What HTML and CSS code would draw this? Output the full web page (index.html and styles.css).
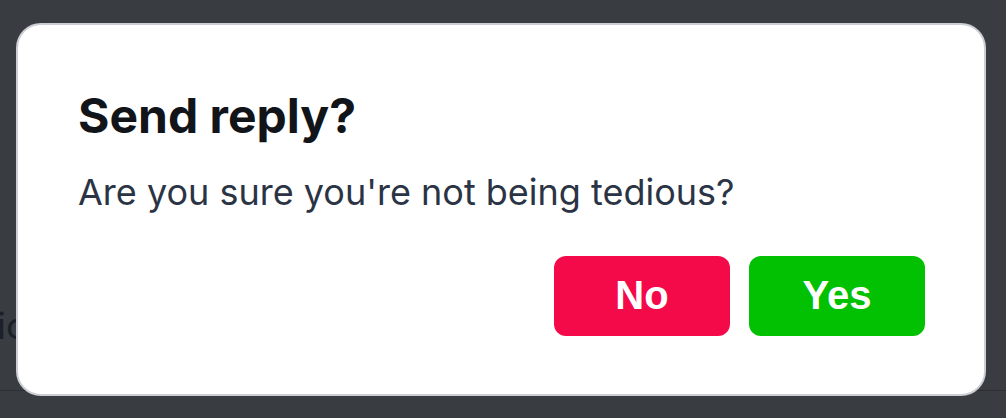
FILE: index.html
```html
<!DOCTYPE html>
<html lang="en">
<head>
    <meta charset="UTF-8">
    <meta name="viewport" content="width=device-width, initial-scale=1.0">
    <title>Send reply?</title>
    <link rel="stylesheet" href="styles.css">
</head>
<body>
    <div class="page">
        <p class="page-line">ic</p>
        <div class="page-footer"></div>
    </div>

    <div class="backdrop">
        <div class="dialog" role="dialog" aria-labelledby="dialogTitle">
            <h1 class="dialog-title" id="dialogTitle">Send reply?</h1>
            <p class="dialog-text">Are you sure you're not being tedious?</p>
            <div class="dialog-actions">
                <button type="button" class="btn btn-no">No</button>
                <button type="button" class="btn btn-yes">Yes</button>
            </div>
        </div>
    </div>
</body>
</html>
```

FILE: styles.css
```css
* {
    margin: 0;
    padding: 0;
    box-sizing: border-box;
}

html, body {
    height: 100%;
    overflow: hidden;
}

body {
    font-family: Inter, 'Noto Sans', sans-serif;
    background: #393d41;
}

/* page behind the overlay */
.page {
    padding-top: 298px;
}

.page-line {
    margin-left: -3px;
    font-size: 37px;
    line-height: 1.5;
    color: #1b1f2a;
    white-space: nowrap;
}

.page-footer {
    margin-top: 36px;
    border-top: 1px solid #2c2f33;
}

/* modal */
.backdrop {
    position: fixed;
    inset: 0;
    display: flex;
    padding: 23px 20px 22px 16px;
}

.dialog {
    flex: 1;
    display: flex;
    flex-direction: column;
    background: white;
    border: 2px solid #cbcfd5;
    border-radius: 25px;
    padding: 62px 59px 60px 60px;
}

.dialog-title {
    font-size: 48px;
    font-weight: 700;
    line-height: 1.2;
    color: #111418;
    margin-bottom: 20px;
}

.dialog-text {
    font-size: 36px;
    line-height: 1.5;
    color: #2b3444;
}

.dialog-actions {
    display: flex;
    justify-content: flex-end;
    gap: 19px;
    margin-top: 37px;
}

.btn {
    width: 176px;
    height: 80px;
    border: none;
    border-radius: 12px;
    font-family: 'Liberation Sans', Arial, sans-serif;
    font-size: 40px;
    font-weight: 700;
    color: white;
    cursor: pointer;
}

.btn-no {
    background: #f50a49;
}

.btn-yes {
    background: #02c002;
}
```
